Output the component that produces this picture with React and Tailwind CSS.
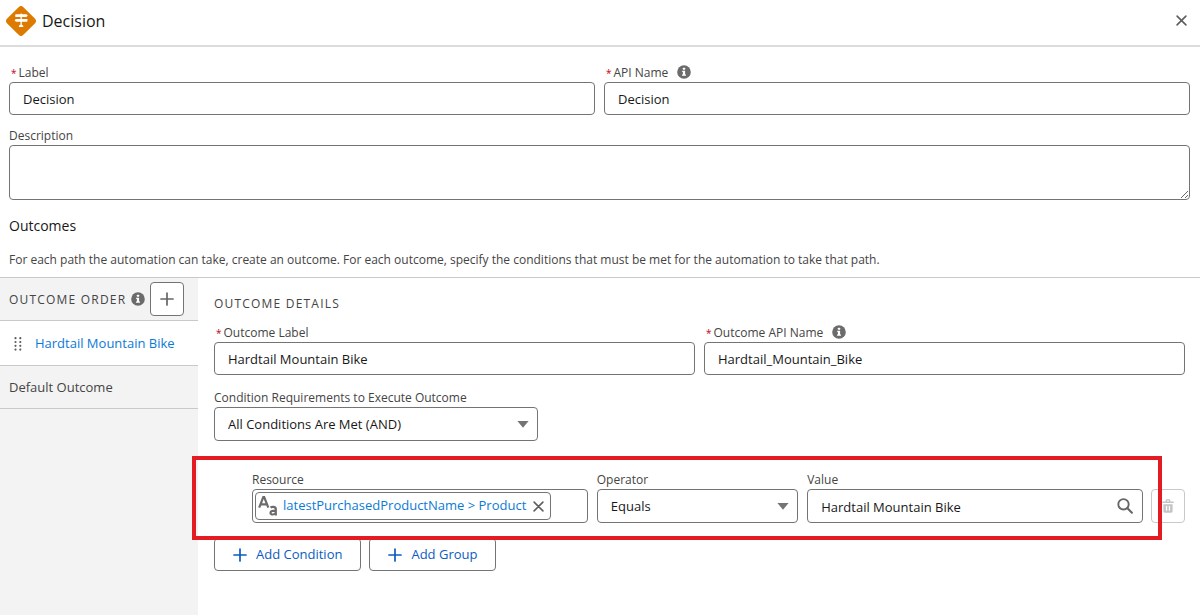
import { useState } from 'react';

const fieldClass =
  'h-[33px] w-full rounded border border-[#747474] bg-white px-[13px] text-[13px] text-[#181818] outline-none focus:border-[#0176d3]';

function InfoIcon() {
  return (
    <svg viewBox="0 0 14 14" className="size-[14px] shrink-0" aria-hidden="true">
      <circle cx="7" cy="7" r="6.8" fill="#6b6b6b" />
      <rect x="5.9" y="2.8" width="2.2" height="2" rx="0.4" fill="#fff" />
      <path d="M5.2 5.8h2.900v3.600h.9v1.300H5V9.400h.9V7.100h-.7z" fill="#fff" />
    </svg>
  );
}

function DecisionIcon() {
  return (
    <svg viewBox="0 0 30 30" className="size-[30px] shrink-0" aria-hidden="true">
      <rect x="3.500" y="3.500" width="23" height="23" rx="3.400" fill="#dd7a01" transform="rotate(45 15 15)" />
      <g fill="#fff">
        <path d="M9.900 8.300h10.600l1.300 1.300-1.300 1.400H9.900a.7.7 0 0 1-.7-.7V9c0-.4.300-.7.700-.7z" />
        <path d="M9.900 12.900h10.900c.4 0 .7.300.7.700V15c0 .4-.3.700-.7.700H9.900l-1.300-1.400z" />
        <path d="M14.500 7.500h1.300v11h-1.300z" />
        <path d="M15.100 18.200c1.100 0 1.900 1 2.300 2.200.1.300-.1.500-.4.500h-3.800c-.3 0-.5-.2-.4-.5.4-1.200 1.200-2.200 2.300-2.200z" />
      </g>
    </svg>
  );
}

function CloseIcon({ className }) {
  return (
    <svg viewBox="0 0 12 12" className={className} fill="none" stroke="#5c5c5c" strokeWidth="1.700" strokeLinecap="round" aria-hidden="true">
      <path d="M1.200 1.200l9.600 9.600M10.800 1.200l-9.600 9.600" />
    </svg>
  );
}

function PlusIcon({ className }) {
  return (
    <svg viewBox="0 0 14 14" className={className} fill="none" stroke="currentColor" strokeWidth="1.700" strokeLinecap="round" aria-hidden="true">
      <path d="M7 1v12M1 7h12" />
    </svg>
  );
}

function DragHandle() {
  return (
    <svg viewBox="0 0 8 14" className="h-[14px] w-2 shrink-0" fill="#5c5c5c" aria-hidden="true">
      {[1.2, 5, 8.8, 12.6].map((y) => (
        <g key={y}>
          <circle cx="1.5" cy={y} r="1.1" />
          <circle cx="6.3" cy={y} r="1.1" />
        </g>
      ))}
    </svg>
  );
}

function TextTypeIcon() {
  return (
    <svg viewBox="0 0 20 20" className="size-5 shrink-0" fill="none" stroke="#6b6b6b" strokeWidth="2.200" aria-hidden="true">
      <path d="M1.200 11.600L5.300 1.200h.9l4.100 10.400M2.800 8.300h5.900" />
      <path d="M12.500 11.500c1.700-1.100 5.300-1 5.300 1.600v6.400M17.800 14.700c-2.700 0-5.300.1-5.300 2.200 0 2.400 4.300 2 5.300-.3" />
    </svg>
  );
}

function SearchIcon() {
  return (
    <svg viewBox="0 0 16 16" className="size-4 shrink-0" fill="none" stroke="#666" strokeLinecap="round" aria-hidden="true">
      <circle cx="6.500" cy="6.300" r="5.200" strokeWidth="1.900" />
      <path d="M10.500 10.300l4.400 4.400" strokeWidth="2.100" />
    </svg>
  );
}

function TrashIcon() {
  return (
    <svg viewBox="0 0 14 14" className="size-[14px]" fill="#c4c4c4" aria-hidden="true">
      <path d="M1.800 2.600h2.900V1.500c0-.7.500-1.200 1.200-1.200h2.200c.7 0 1.200.5 1.200 1.200v1.100h2.900c.3 0 .6.300.6.600v.7H1.200v-.7c0-.3.300-.6.600-.6zm4.100 0h2.200V1.500H5.900z" />
      <path fillRule="evenodd" d="M2.400 5.300h9.200v7c0 .8-.6 1.400-1.400 1.400H3.800c-.8 0-1.400-.6-1.400-1.400zm2.500 1.600v4.900h1.300V6.900zm2.900 0v4.900h1.300V6.900z" />
    </svg>
  );
}

function FieldLabel({ htmlFor, required, info, children }) {
  return (
    <div className="flex h-5 items-start">
      <label htmlFor={htmlFor} className="text-xs leading-[22px] whitespace-nowrap text-[#444]">
        {required && <span className="mr-[2px] ml-[2px] text-[10px] text-[#ba0517]">*</span>}
        {children}
      </label>
      {info && (
        <button type="button" aria-label="Help" className="ml-[9px] flex h-5 items-center">
          <InfoIcon />
        </button>
      )}
    </div>
  );
}

function TextField({ id, label, value, required, info }) {
  return (
    <div className="min-w-0">
      <FieldLabel htmlFor={id} required={required} info={info}>{label}</FieldLabel>
      <input id={id} type="text" defaultValue={value} className={fieldClass} />
    </div>
  );
}

function SelectField({ id, label, options }) {
  return (
    <div className="min-w-0">
      <FieldLabel htmlFor={id}>{label}</FieldLabel>
      <div className="relative">
        <select
          id={id}
          className="h-[34px] w-full appearance-none rounded border border-[#747474] bg-white px-[13px] pt-[2px] text-[13px] text-[#181818] outline-none"
        >
          {options.map((option) => (
            <option key={option}>{option}</option>
          ))}
        </select>
        <svg viewBox="0 0 12 7" className="pointer-events-none absolute top-[14px] right-[9px] h-[7px] w-3" fill="#747474" aria-hidden="true">
          <path d="M.4 0h11.200L6 6.800z" />
        </svg>
      </div>
    </div>
  );
}

function ResourceField() {
  const [resource, setResource] = useState('latestPurchasedProductName > Product');

  return (
    <div className="min-w-0">
      <FieldLabel htmlFor="resource">Resource</FieldLabel>
      <div className="flex h-[34px] items-center rounded border border-[#747474] bg-white px-[2px]">
        {resource && (
          <span className="flex h-7 shrink-0 items-center rounded border border-[#747474] pr-[6px] pl-[2px]">
            <TextTypeIcon />
            <a href="#resource" className="ml-[5px] text-[13px] whitespace-nowrap text-[#0b7ad6]">{resource}</a>
            <button type="button" aria-label="Remove" className="ml-[7px]" onClick={() => setResource('')}>
              <CloseIcon className="size-[11px]" />
            </button>
          </span>
        )}
        <input id="resource" type="text" className="h-full w-full min-w-0 text-[13px] outline-none" />
      </div>
    </div>
  );
}

function AddButton({ children }) {
  return (
    <button type="button" className="flex h-[33px] items-center gap-[9px] rounded border border-[#747474] bg-white px-[18px] text-[13px] text-[#0b5cc0]">
      <PlusIcon className="size-[14px]" />
      {children}
    </button>
  );
}

function OutcomeOrder() {
  return (
    <nav className="w-[198px] shrink-0 bg-[#f3f3f3] text-[13px]">
      <div className="flex h-[43px] items-center border-b border-[#c9c9c9] pl-[9px]">
        <h3 className="pt-[2px] text-xs tracking-widest whitespace-nowrap text-[#444] uppercase">Outcome Order</h3>
        <button type="button" aria-label="Help" className="ml-[5px]">
          <InfoIcon />
        </button>
        <button
          type="button"
          aria-label="Add outcome"
          className="ml-[5px] flex size-[34px] shrink-0 items-center justify-center rounded border border-[#747474] bg-white text-[#666]"
        >
          <PlusIcon className="size-[14px]" />
        </button>
      </div>
      <a href="#hardtail" className="flex h-[45px] items-center gap-[13px] border-b border-[#c9c9c9] bg-white pt-[2px] pl-[14px] text-[#0b7ad6]">
        <DragHandle />
        Hardtail Mountain Bike
      </a>
      <a href="#default" className="flex h-[43px] items-center border-b border-[#c9c9c9] pt-[2px] pl-[9px] text-[#444]">
        Default Outcome
      </a>
    </nav>
  );
}

function OutcomeDetails() {
  return (
    <section className="min-w-0 flex-1 pt-4 pr-[15px] pl-4">
      <h3 className="text-xs leading-5 tracking-widest text-[#444] uppercase">Outcome Details</h3>
      <div className="mt-2 grid grid-cols-2 gap-[9px]">
        <TextField id="outcome-label" label="Outcome Label" value="Hardtail Mountain Bike" required />
        <TextField id="outcome-api" label="Outcome API Name" value="Hardtail_Mountain_Bike" required info />
      </div>
      <div className="mt-3 w-1/3">
        <SelectField
          id="requirements"
          label="Condition Requirements to Execute Outcome"
          options={['All Conditions Are Met (AND)', 'Any Condition Is Met (OR)']}
        />
      </div>

      <div className="relative mt-7 flex items-end gap-2 pl-[38px]">
        <div className="grid flex-1 grid-cols-[5fr_3fr_5fr] gap-[9px]">
          <ResourceField />
          <SelectField id="operator" label="Operator" options={['Equals', 'Does Not Equal', 'Contains']} />
          <div className="min-w-0">
            <FieldLabel htmlFor="value">Value</FieldLabel>
            <div className="flex h-[34px] items-center rounded border border-[#747474] bg-white pr-[9px] pl-[13px]">
              <input
                id="value"
                type="text"
                defaultValue="Hardtail Mountain Bike"
                className="h-full w-full min-w-0 pt-px text-[13px] text-[#181818] outline-none"
              />
              <SearchIcon />
            </div>
          </div>
        </div>
        <button
          type="button"
          disabled
          aria-label="Delete condition"
          className="flex size-[34px] items-center justify-center rounded border border-[#c9c9c9] bg-white"
        >
          <TrashIcon />
        </button>
        {/* Highlight around the condition */}
        <div className="pointer-events-none absolute -top-[13px] right-[23px] -bottom-[17px] -left-[22px] z-10 border-4 border-[#e31b23]" />
      </div>

      <div className="mt-[15px] flex gap-2">
        <AddButton>Add Condition</AddButton>
        <AddButton>Add Group</AddButton>
      </div>
    </section>
  );
}

export default function App() {
  return (
    <div className="flex min-h-screen flex-col bg-white font-['Open_Sans','Noto_Sans',sans-serif] text-[#181818]">
      <header className="flex h-[47px] items-center border-b-2 border-[#dcdcdc] pr-[13px] pb-1 pl-[6px]">
        <DecisionIcon />
        <h1 className="ml-[6px] flex-1 text-base">Decision</h1>
        <button type="button" aria-label="Close">
          <CloseIcon className="size-[11px]" />
        </button>
      </header>

      <div className="pt-[15px] pr-[10px] pl-[9px]">
        <div className="grid grid-cols-2 gap-[9px]">
          <TextField id="label" label="Label" value="Decision" required />
          <TextField id="api-name" label="API Name" value="Decision" required info />
        </div>
        <div className="mt-[10px]">
          <FieldLabel htmlFor="description">Description</FieldLabel>
          <textarea
            id="description"
            className="block h-[55px] w-full rounded border border-[#747474] px-[13px] py-2 text-[13px] outline-none"
          />
        </div>
        <h2 className="mt-[14px] text-sm leading-6">Outcomes</h2>
        <p className="mt-3 mb-[7px] text-xs leading-5 text-[#444]">
          For each path the automation can take, create an outcome. For each outcome, specify the conditions that must be
          met for the automation to take that path.
        </p>
      </div>

      <div className="flex flex-1 border-t border-[#c9c9c9]">
        <OutcomeOrder />
        <OutcomeDetails />
      </div>
    </div>
  );
}
